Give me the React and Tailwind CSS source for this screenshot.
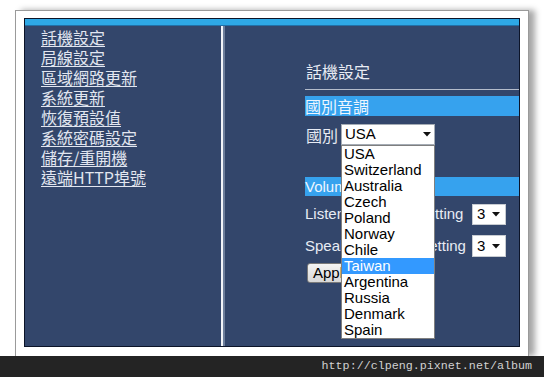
export default function App() {
  const countries = ["USA", "Switzerland", "Australia", "Czech", "Poland", "Norway", "Chile", "Taiwan", "Argentina", "Russia", "Denmark", "Spain"];
  const links = ["話機設定", "局線設定", "區域網路更新", "系統更新", "恢復預設值", "系統密碼設定", "儲存/重開機", "遠端HTTP埠號"];
  const cjk = "font-['Noto_Sans_CJK_TC','Liberation_Sans',sans-serif]";
  const arrow = (
    <svg width="8" height="5" viewBox="0 0 8 5" className="shrink-0">
      <path d="M0 0 H8 L4 4.5 Z" fill="#111" />
    </svg>
  );
  return (
    <div className="w-[544px] h-[377px] bg-white flex flex-col overflow-hidden font-['Liberation_Sans',Arial,sans-serif]">
      <div className="h-[356px] pl-[15px] pt-[10px]">
        <div className="w-[514px] h-[346px] border-l border-t border-r border-[#9a9a9a] bg-white pl-[8px] pt-[7px] shadow-[6px_0_6px_rgba(0,0,0,0.35)]">
          <div className="w-[496px] h-[329px] border border-[#0c1428] bg-[#33466b] flex flex-col">
            <div className="h-[6px] bg-[#2ea8e6]" />
            <div className="h-[1px] bg-[#2170a8]" />
            <div className="flex flex-1">
              <div className={`w-[196px] pl-[16px] pt-[1px] flex flex-col ${cjk}`}>
                {links.map((l) => (
                  <a key={l} className="text-[16px] leading-[20px] text-[#e2e6f0] underline underline-offset-[2px] w-fit">
                    {l}
                  </a>
                ))}
              </div>
              <div className="w-[2px] bg-[#f2f4f8]" />
              <div className="w-[2px] bg-[#6d7e9b]" />
              <div className="flex-1 pl-[80px] relative flex flex-col text-[#e8ecf4]">
                <div className={`mt-[35px] h-[20px] text-[16px] leading-[20px] pl-[1px] ${cjk}`}>話機設定</div>
                <div className="mt-[8px] h-[1px] bg-[#b4bccb]" />
                <div className={`mt-[6px] h-[20px] bg-[#36a2ee] text-[16px] leading-[20px] text-[#eef6ff] ${cjk}`}>國別音調</div>
                <div className="mt-[8px] h-[21px] flex items-center">
                  <span className={`text-[16px] leading-[20px] pl-[1px] w-[36px] ${cjk}`}>國別</span>
                  <div className="w-[94px] h-[21px] bg-white border border-[#a5acb5] flex items-center justify-between pl-[3px] pr-[3px] text-[15px] text-black">
                    <span>USA</span>
                    {arrow}
                  </div>
                </div>
                <div className="mt-[32px] h-[19px] bg-[#36a2ee] text-[15px] leading-[19px] text-[#eef6ff]">Volume</div>
                <div className="mt-[7px] h-[21px] grid grid-cols-[167px_34px] items-center">
                  <span className="text-[15px]">Listener Volume Setting</span>
                  <div className="h-[21px] bg-white border border-[#c8ccd2] flex items-center justify-between pl-[4px] pr-[5px] text-[15px] text-black">
                    <span>3</span>
                    {arrow}
                  </div>
                </div>
                <div className="mt-[11px] h-[22px] grid grid-cols-[167px_34px] items-center">
                  <span className="text-[15px]">Speaker Volume Setting</span>
                  <div className="h-[22px] bg-white border border-[#c8ccd2] flex items-center justify-between pl-[4px] pr-[5px] text-[15px] text-black">
                    <span>3</span>
                    {arrow}
                  </div>
                </div>
                <div className="mt-[4px] ml-[2px]">
                  <button className="h-[20px] px-[5px] rounded-[3px] border border-[#7a7a7a] bg-gradient-to-b from-[#f4f4f4] to-[#d8d8d8] text-[15px] leading-[18px] text-black">
                    Apply
                  </button>
                </div>
                <div className="absolute left-[116px] top-[119px] w-[94px] bg-white border border-[#7f7f7f] flex flex-col">
                  {countries.map((c) => (
                    <div
                      key={c}
                      className={`h-[16px] leading-[16px] text-[15px] pl-[2px] ${c === "Taiwan" ? "bg-[#3399ff] text-white" : "text-black"}`}
                    >
                      {c}
                    </div>
                  ))}
                </div>
              </div>
            </div>
          </div>
        </div>
      </div>
      <div className="flex-1 bg-[#242424] flex items-center justify-end pr-[12px]">
        <span className="font-['Liberation_Mono',monospace] text-[11.7px] text-[#d2d2d2]">http://clpeng.pixnet.net/album</span>
      </div>
    </div>
  );
}
